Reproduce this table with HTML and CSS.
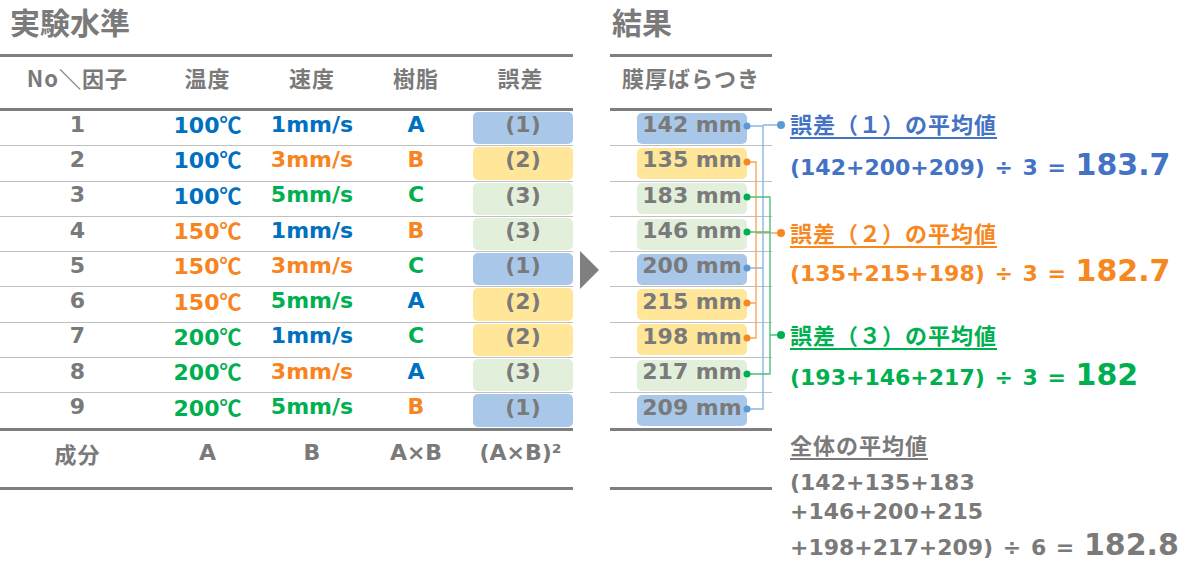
FILE: index.html
```html
<!DOCTYPE html>
<html lang="ja">
<head>
<meta charset="utf-8">
<title>実験水準と結果</title>
<link rel="stylesheet" href="styles.css">
</head>
<body>
<div class="page">
  <section class="levels">
    <h2 class="title">実験水準</h2>
    <div class="tbl">
      <div class="thead">
        <div class="cell jp">No＼因子</div>
        <div class="cell jp">温度</div>
        <div class="cell jp">速度</div>
        <div class="cell jp">樹脂</div>
        <div class="cell jp">誤差</div>
      </div>
      <div class="tbody">
        <div class="row"><div class="cell">1</div><div class="cell c-blue">100<span class="deg">℃</span></div><div class="cell c-blue">1mm/s</div><div class="cell c-blue">A</div><div class="err"><span class="chip chip-blue">(1)</span></div></div>
        <div class="row"><div class="cell">2</div><div class="cell c-blue">100<span class="deg">℃</span></div><div class="cell c-orange">3mm/s</div><div class="cell c-orange">B</div><div class="err"><span class="chip chip-yellow">(2)</span></div></div>
        <div class="row"><div class="cell">3</div><div class="cell c-blue">100<span class="deg">℃</span></div><div class="cell c-green">5mm/s</div><div class="cell c-green">C</div><div class="err"><span class="chip chip-green">(3)</span></div></div>
        <div class="row"><div class="cell">4</div><div class="cell c-orange">150<span class="deg">℃</span></div><div class="cell c-blue">1mm/s</div><div class="cell c-orange">B</div><div class="err"><span class="chip chip-green">(3)</span></div></div>
        <div class="row"><div class="cell">5</div><div class="cell c-orange">150<span class="deg">℃</span></div><div class="cell c-orange">3mm/s</div><div class="cell c-green">C</div><div class="err"><span class="chip chip-blue">(1)</span></div></div>
        <div class="row"><div class="cell">6</div><div class="cell c-orange">150<span class="deg">℃</span></div><div class="cell c-green">5mm/s</div><div class="cell c-blue">A</div><div class="err"><span class="chip chip-yellow">(2)</span></div></div>
        <div class="row"><div class="cell">7</div><div class="cell c-green">200<span class="deg">℃</span></div><div class="cell c-blue">1mm/s</div><div class="cell c-green">C</div><div class="err"><span class="chip chip-yellow">(2)</span></div></div>
        <div class="row"><div class="cell">8</div><div class="cell c-green">200<span class="deg">℃</span></div><div class="cell c-orange">3mm/s</div><div class="cell c-blue">A</div><div class="err"><span class="chip chip-green">(3)</span></div></div>
        <div class="row"><div class="cell">9</div><div class="cell c-green">200<span class="deg">℃</span></div><div class="cell c-green">5mm/s</div><div class="cell c-orange">B</div><div class="err"><span class="chip chip-blue">(1)</span></div></div>
      </div>
      <div class="tfoot">
        <div class="cell jp">成分</div>
        <div class="cell">A</div>
        <div class="cell">B</div>
        <div class="cell">A×B</div>
        <div class="cell">(A×B)²</div>
      </div>
    </div>
  </section>

  <div class="arrow"><span class="tri"></span></div>

  <section class="results">
    <h2 class="title">結果</h2>
    <div class="tbl">
      <div class="thead"><div class="cell jp">膜厚ばらつき</div></div>
      <div class="tbody">
        <div class="row"><span class="val chip-blue">142 mm</span></div>
        <div class="row"><span class="val chip-yellow">135 mm</span></div>
        <div class="row"><span class="val chip-green">183 mm</span></div>
        <div class="row"><span class="val chip-green">146 mm</span></div>
        <div class="row"><span class="val chip-blue">200 mm</span></div>
        <div class="row"><span class="val chip-yellow">215 mm</span></div>
        <div class="row"><span class="val chip-yellow">198 mm</span></div>
        <div class="row"><span class="val chip-green">217 mm</span></div>
        <div class="row"><span class="val chip-blue">209 mm</span></div>
      </div>
      <div class="tfoot"></div>
    </div>
  </section>

  <section class="notes">
    <div class="label n-blue l1">誤差（１）の平均値</div>
    <div class="formula n-blue f1">(142+200+209) ÷ 3 = <span class="big">183.7</span></div>
    <div class="label n-orange l2">誤差（２）の平均値</div>
    <div class="formula n-orange f2">(135+215+198) ÷ 3 = <span class="big">182.7</span></div>
    <div class="label n-green l3">誤差（３）の平均値</div>
    <div class="formula n-green f3">(193+146+217) ÷ 3 = <span class="big">182</span></div>
    <div class="label n-gray l4">全体の平均値</div>
    <div class="sum s1">(142+135+183</div>
    <div class="sum">+146+200+215</div>
    <div class="formula n-gray s3">+198+217+209) ÷ 6 = <span class="big">182.8</span></div>
  </section>

  <svg class="wires" width="60" height="330" viewBox="740 100 60 330" aria-hidden="true">
    <g fill="none" stroke-width="1.4">
      <path d="M747 126 H763 V409 H747 M747 268 H763 M763 125 H781" stroke="#8db5e2"/>
      <path d="M747 162 H756 V338 H747 M747 303 H756 M756 233 H781" stroke="#f9a75e"/>
      <path d="M747 197 H770 V374 H747 M747 232 H770 M770 335 H781" stroke="#4dc07c"/>
    </g>
    <g fill="#5b9bd5">
      <circle cx="747" cy="126" r="3.5"/><circle cx="747" cy="268" r="3.5"/><circle cx="747" cy="409" r="3.5"/><circle cx="781" cy="125" r="4"/>
    </g>
    <g fill="#f7871f">
      <circle cx="747" cy="162" r="3.5"/><circle cx="747" cy="303" r="3.5"/><circle cx="747" cy="338" r="3.5"/><circle cx="781" cy="233" r="4"/>
    </g>
    <g fill="#00b050">
      <circle cx="747" cy="197" r="3.5"/><circle cx="747" cy="232" r="3.5"/><circle cx="747" cy="374" r="3.5"/><circle cx="781" cy="335" r="4"/>
    </g>
  </svg>
</div>
</body>
</html>
```

FILE: styles.css
```css
* { box-sizing: border-box; }
html, body { margin: 0; padding: 0; background: #fff; }
body {
  font-family: "DejaVu Sans", "Noto Sans CJK JP", sans-serif;
  font-weight: 700;
  color: #7a7a7a;
}
.page {
  position: relative;
  display: flex;
  width: 1200px;
  height: 568px;
  overflow: hidden;
}
.jp { font-family: "Noto Sans CJK JP", sans-serif; letter-spacing: 1px; }
.deg { font-family: "Noto Sans CJK JP", sans-serif; }

.title {
  margin: 0;
  height: 54px;
  padding: 1px 0 0 10px;
  font-family: "Noto Sans CJK JP", sans-serif;
  font-size: 30px;
  line-height: 40px;
  font-weight: 700;
  color: #7a7a7a;
}

.levels { flex: none; width: 573px; }
.results { flex: none; width: 162px; }
.results .title { padding-left: 2px; }

.tbl { border-top: 3px solid #7f7f7f; }
.thead, .row, .tfoot {
  display: grid;
  grid-template-rows: 100%;
  align-items: center;
  justify-items: center;
  font-size: 22px;
}
.levels .thead, .levels .row, .levels .tfoot {
  grid-template-columns: 155px 105px 104px 104px 105px;
}
.results .thead, .results .row, .results .tfoot {
  grid-template-columns: 1fr;
}
.thead {
  height: 54px;
  padding-bottom: 12px;
  border-bottom: 3px solid #7f7f7f;
}
.tbody { border-bottom: 3px solid #7f7f7f; }
.row {
  height: 35.3px;
  border-bottom: 1px solid #c0c0c0;
}
.row:last-child { border-bottom: none; height: 34.3px; }
.row .cell {
  line-height: 22px;
  padding-bottom: 7px;
}
.tfoot {
  height: 59px;
  padding-bottom: 12px;
  border-bottom: 3px solid #7f7f7f;
}

.c-blue { color: #0070c0; }
.c-orange { color: #f7841f; }
.c-green { color: #00b050; }

.err {
  align-self: stretch;
  justify-self: stretch;
  padding: 1px 0 1px 5px;
  display: flex;
}
.chip, .val {
  display: flex;
  align-items: center;
  justify-content: center;
  border-radius: 5px;
  line-height: 22px;
  padding-bottom: 6px;
  color: #7a7a7a;
}
.chip { flex: 1; }
.chip-blue { background: #a9c8e9; }
.chip-yellow { background: #ffe699; }
.chip-green { background: #e2efda; }

.results .row { justify-items: start; padding-left: 27px; }
.val {
  width: 110px;
  height: 31px;
}

.arrow {
  flex: none;
  width: 37px;
  padding: 251px 0 0 7px;
}
.tri {
  display: block;
  width: 0;
  height: 0;
  border-left: 19px solid #7f7f7f;
  border-top: 19px solid transparent;
  border-bottom: 19px solid transparent;
}

.notes {
  flex: none;
  margin-left: 18px;
  padding-top: 108px;
  white-space: nowrap;
}
.label {
  height: 30px;
  font-family: "Noto Sans CJK JP", sans-serif;
  font-size: 22px;
  line-height: 30px;
  letter-spacing: 1px;
  text-decoration: underline;
  text-decoration-thickness: 2px;
  text-underline-offset: 4px;
}
.formula {
  height: 40px;
  font-size: 22px;
  line-height: 40px;
  word-spacing: 2px;
}
.big { font-size: 30px; line-height: 30px; word-spacing: 0; }
.sum { height: 29px; font-size: 22px; line-height: 29px; }

.n-blue { color: #4472c4; }
.n-orange { color: #f7871f; }
.n-green { color: #00b050; }
.n-gray { color: #7a7a7a; }

.f1 { margin-top: 10px; }
.l2 { margin-top: 29px; }
.f2 { margin-top: 7px; }
.l3 { margin-top: 25px; }
.f3 { margin-top: 9px; }
.l4 { margin-top: 31px; }
.s1 { margin-top: 9px; }
.s3 { margin-top: 2px; }

.wires {
  position: absolute;
  left: 740px;
  top: 100px;
  overflow: visible;
}
```
